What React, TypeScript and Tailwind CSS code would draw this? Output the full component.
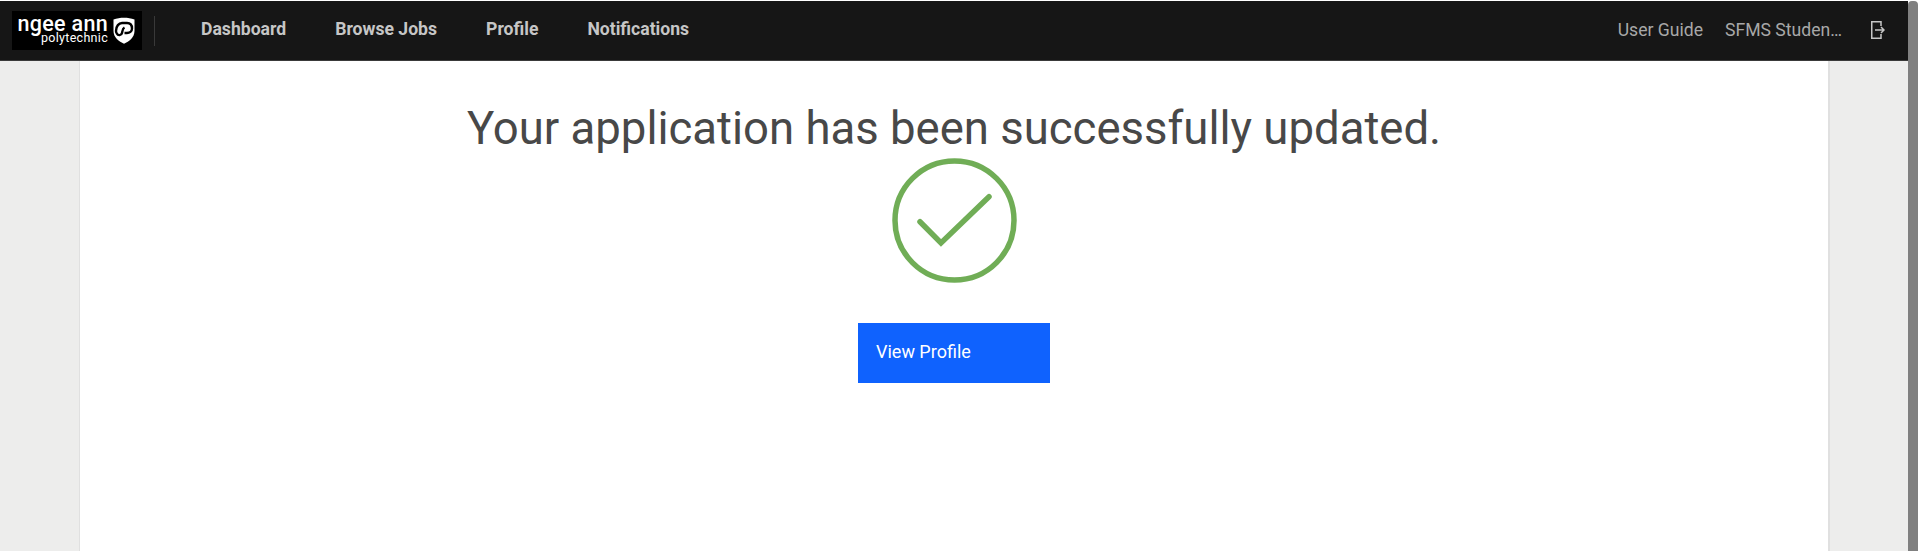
import React from 'react';

const navLinks = ['Dashboard', 'Browse Jobs', 'Profile', 'Notifications'];

function Logo() {
  return (
    <div className="flex h-[39px] w-[130px] items-center gap-[5px] bg-black pl-[5px] text-white">
      <div className="flex w-[91px] flex-col items-end pb-[2px]">
        <span className="text-[21.5px] leading-[17px] font-medium tracking-[0.3px] font-['Roboto',sans-serif]">ngee ann</span>
        <span className="text-[12.5px] leading-[12px] font-normal tracking-[0.3px] font-['Roboto',sans-serif]">polytechnic</span>
      </div>
      <svg width="22" height="27" viewBox="0 0 22 27" fill="none">
        <path d="M0.5 2.5C7 0.3 15 0.3 21.5 2.5V14C21.5 20.5 16 24.5 11 26.7C6 24.5 0.5 20.5 0.5 14Z" fill="white" />
        <path
          d="M3 14C3 9 6 6 9 6H14C17.5 6 19 8.5 19 11.5C19 14.5 16.5 16 14 16H11.5M11.5 10.5C9.5 11.5 9.5 14 9 16C8.5 18.5 5 19 3.8 16.5C3.2 15.5 3 15 3 14"
          stroke="black"
          strokeWidth="2.4"
        />
      </svg>
    </div>
  );
}

export default function App() {
  return (
    <div className="flex h-[551px] w-full overflow-hidden bg-white font-['Roboto',sans-serif]">
      <div className="flex min-w-0 flex-1 flex-col">
        <header className="mt-px flex h-[60px] shrink-0 items-center border-b border-[#3a3a3a] bg-[#161616] pl-[12px] pr-[23px]">
          <Logo />
          <div className="ml-[12px] h-[30px] w-px bg-[#393939]" />
          <nav className="ml-[46px] flex items-center gap-[49px] pb-[3px]">
            {navLinks.map((link) => (
              <a key={link} className="text-[17.6px] font-bold text-[#c6c6c6]">
                {link}
              </a>
            ))}
          </nav>
          <div className="ml-auto flex items-center pb-px text-[17.6px] text-[#a8a8a8]">
            <span>User Guide</span>
            <span className="ml-[22px] w-[122px] truncate">SFMS Student 1</span>
            <svg className="ml-[24px]" width="14" height="18" viewBox="0 0 14 18" fill="none" stroke="#c6c6c6" strokeWidth="1.5">
              <path d="M10 5V0.75H0.75V17.25H10V13" />
              <path d="M4 9H13M10 6L13 9L10 12" />
            </svg>
          </div>
        </header>
        <div className="flex min-h-0 flex-1 bg-[#ededec]">
          <main className="ml-[79px] mr-[78px] flex flex-1 flex-col items-center border-l border-r-2 border-[#e0e0e0] bg-white">
            <h1 className="mt-[40px] text-[45.5px] leading-[56px] font-normal text-[#484848]">
              Your application has been successfully updated.
            </h1>
            <svg className="mt-px" width="125" height="125" viewBox="0 0 125 125" fill="none" stroke="#70ad56">
              <circle cx="62.5" cy="62.5" r="59.5" strokeWidth="5.5" />
              <path d="M28 63.7L49 85L97 38.7" strokeWidth="5.5" strokeLinecap="round" />
            </svg>
            <button className="mt-[40px] flex h-[60px] w-[192px] items-center bg-[#0f62fe] pb-[3px] pl-[18px] text-[18px] text-white">
              View Profile
            </button>
          </main>
        </div>
      </div>
      <div className="mt-px w-[10px] shrink-0 rounded-t-[4px] bg-[#808080]" />
    </div>
  );
}
